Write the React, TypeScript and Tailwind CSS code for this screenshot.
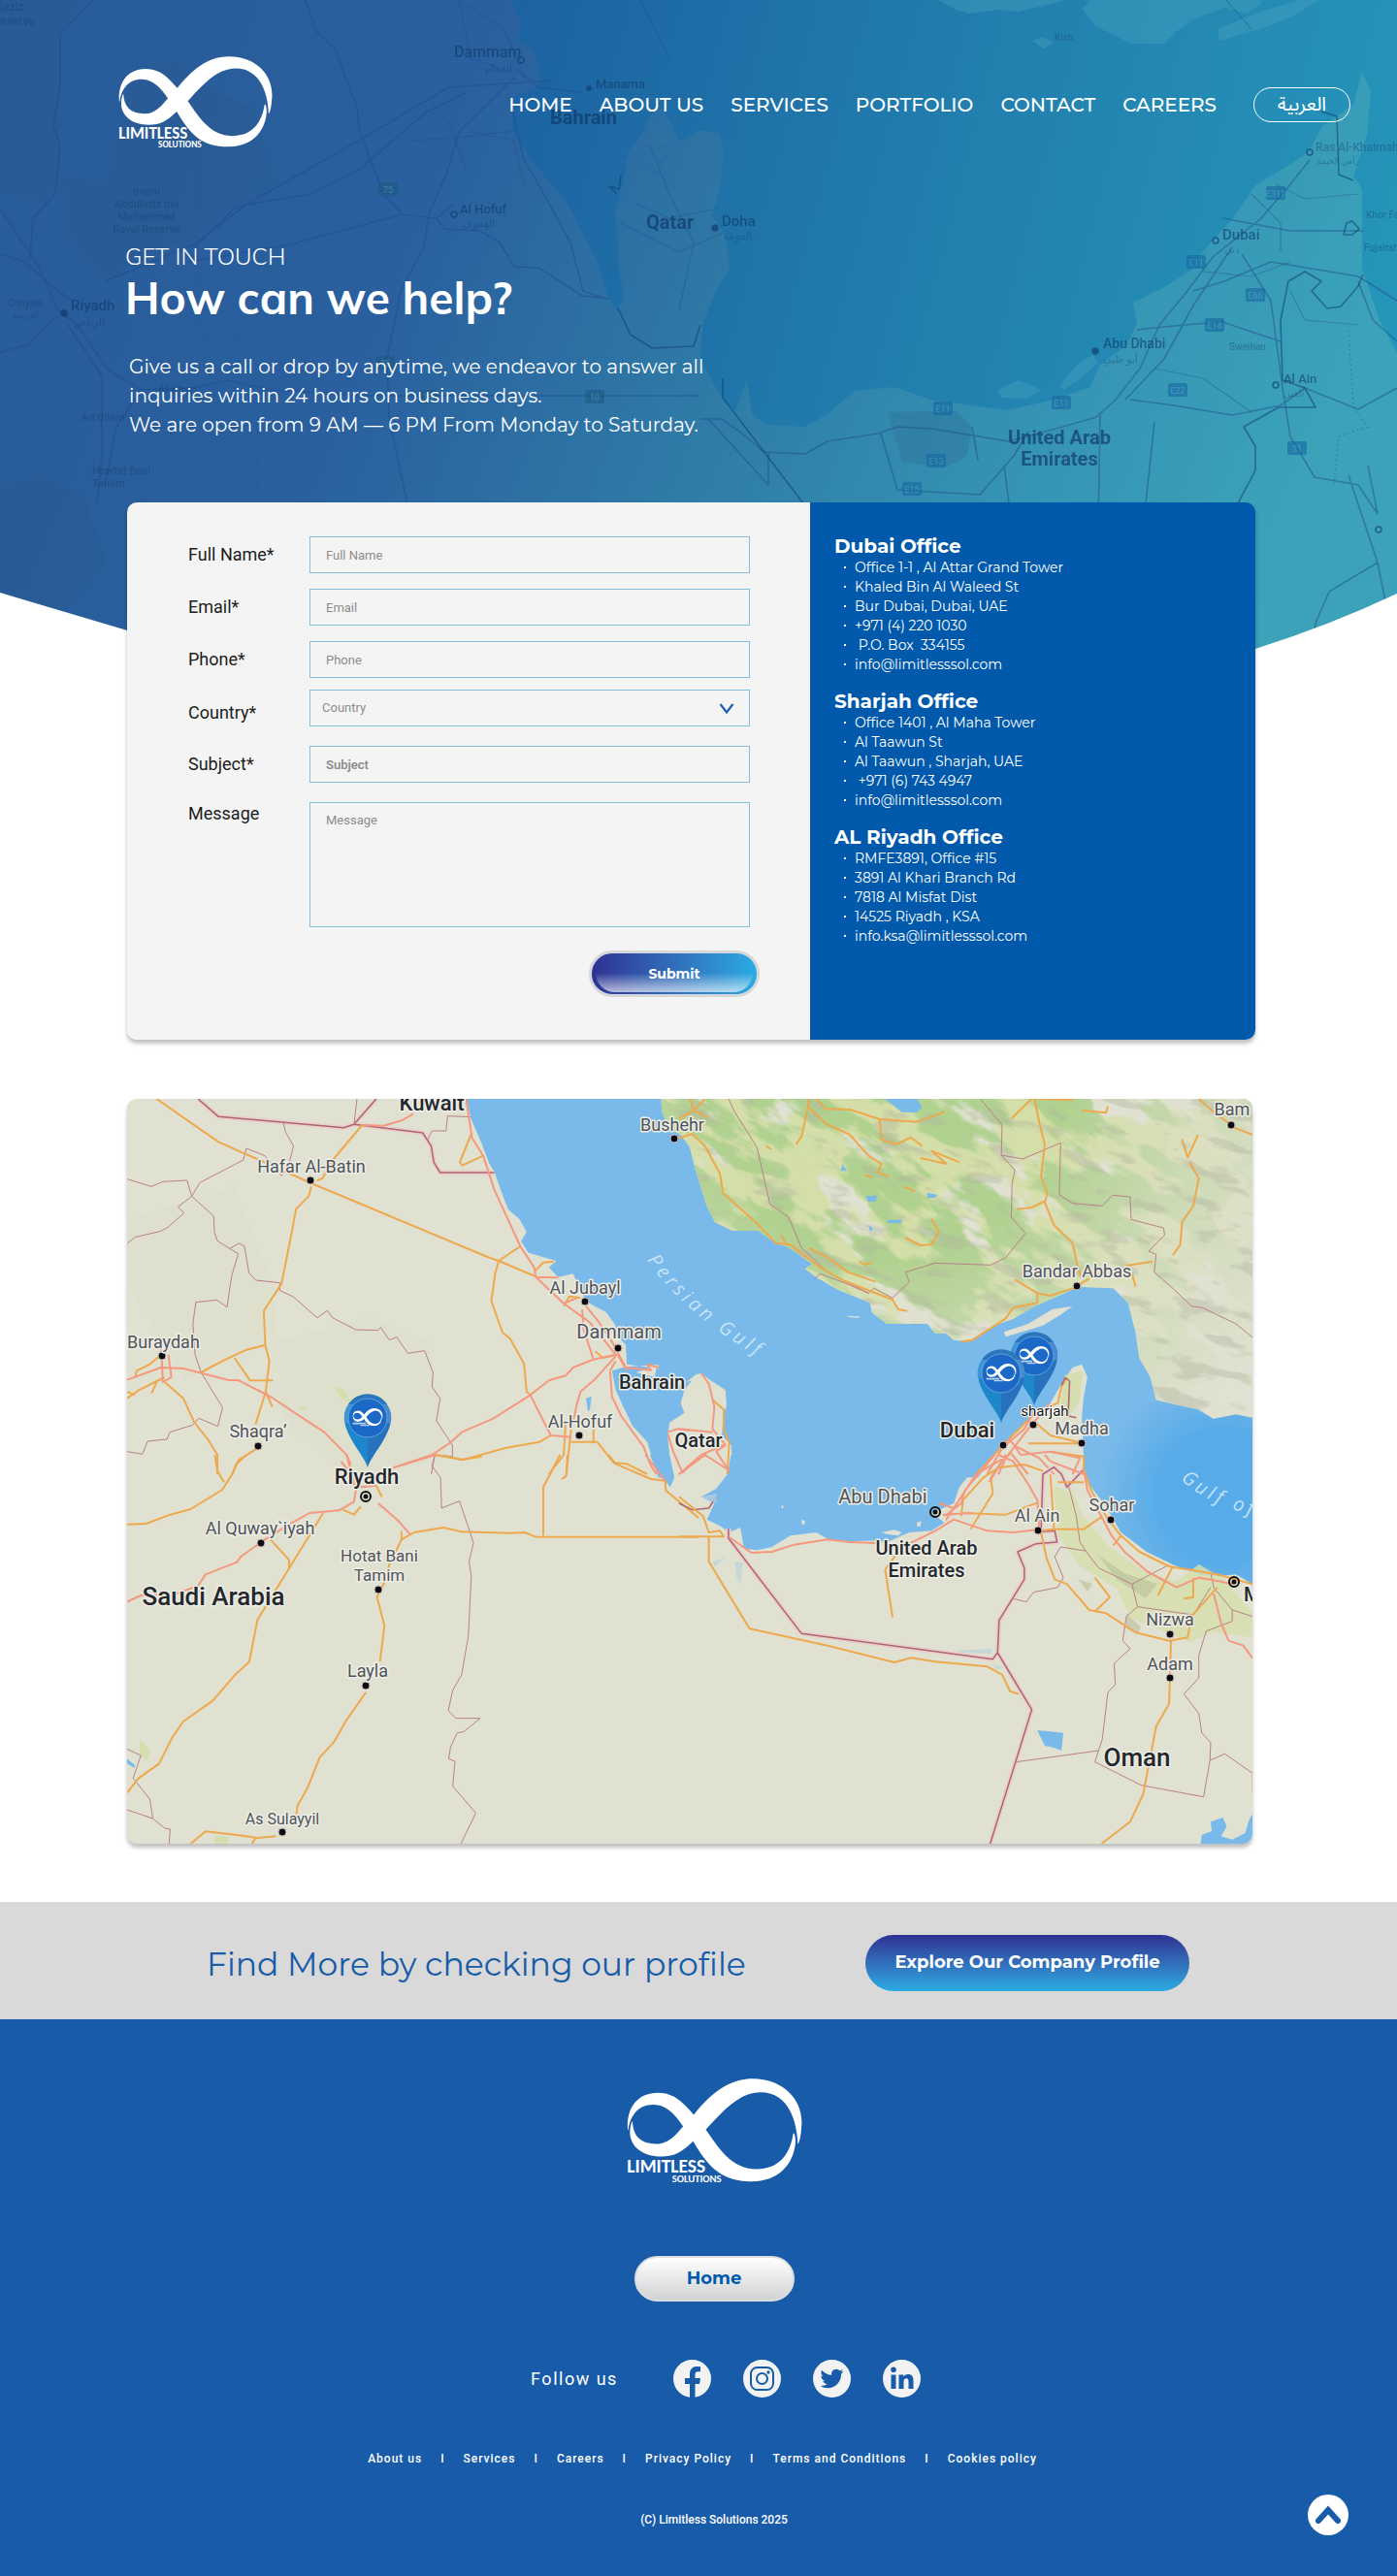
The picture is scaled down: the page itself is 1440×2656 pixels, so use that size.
import type { ReactNode } from "react";

/* ---------- Brand ---------- */

const RIBBONS =
  "M141 257C136 190 170 142 235 142C285 142 315 175 345 210L382 256C420 310 460 378 538 378C610 378 643 330 652 268C656 262 661 285 658 305C648 372 600 416 525 416C430 416 390 372 343 292L312 246C290 213 262 179 220 179C172 179 148 215 143 257Z" +
  "M156 232C158 275 180 300 230 300C270 300 295 265 312 246L345 210C390 155 445 99 527 99C625 99 688 170 677 252C676 275 670 300 666 300C664 235 640 141 551 141C480 141 425 210 382 256L343 292C310 325 285 339 245 339C180 339 138 300 150 245C152 236 154 230 156 232Z";

function Logo({ className }: { className: string }) {
  return (
    <svg viewBox="138 98 542 324" className={className} role="img" aria-label="Limitless Solutions" fill="#fff">
      <path d={RIBBONS} />
      <text x="139" y="389" fontFamily="Carlito, Lato" fontWeight="700" fontSize="58">
        LIMITLESS
      </text>
      <text x="278" y="418" fontFamily="Carlito, Lato" fontWeight="700" fontSize="32">
        SOLUTIONS
      </text>
    </svg>
  );
}

/* ---------- Hero backdrop ---------- */

type Label = { x: number; y: number; t: string; s?: number; b?: boolean; a?: "start" | "middle" | "end" };

const heroLabels: Label[] = [
  { x: 0, y: 11, t: "laziz", s: 12 },
  { x: 0, y: 26, t: "eserve", s: 12 },
  { x: 468, y: 59, t: "Dammam", s: 16 },
  { x: 614, y: 91, t: "Manama", s: 13 },
  { x: 567, y: 128, t: "Bahrain", s: 20, b: true },
  { x: 474, y: 220, t: "Al Hofuf", s: 13 },
  { x: 666, y: 236, t: "Qatar", s: 20, b: true },
  { x: 744, y: 233, t: "Doha", s: 15 },
  { x: 151, y: 201, t: "Imam", s: 11, a: "middle" },
  { x: 151, y: 214, t: "Abdulaziz bin", s: 11, a: "middle" },
  { x: 151, y: 227, t: "Muhammad", s: 11, a: "middle" },
  { x: 151, y: 240, t: "Royal Reserve", s: 11, a: "middle" },
  { x: 9, y: 316, t: "Diriyah", s: 11 },
  { x: 73, y: 320, t: "Riyadh", s: 15 },
  { x: 163, y: 405, t: "Al-Kharj", s: 11 },
  { x: 84, y: 434, t: "Ad Dilam", s: 11 },
  { x: 95, y: 489, t: "Howtat Bani", s: 11 },
  { x: 95, y: 502, t: "Tamim", s: 11 },
  { x: 1087, y: 42, t: "Kish", s: 10 },
  { x: 1356, y: 156, t: "Ras Al-Khaimah", s: 12 },
  { x: 1260, y: 247, t: "Dubai", s: 15 },
  { x: 1408, y: 225, t: "Khor Fakkan", s: 10 },
  { x: 1406, y: 259, t: "Fujairah", s: 10 },
  { x: 1137, y: 359, t: "Abu Dhabi", s: 14 },
  { x: 1267, y: 361, t: "Sweihan", s: 10 },
  { x: 1323, y: 395, t: "Al Ain", s: 13 },
  { x: 1092, y: 458, t: "United Arab", s: 20, b: true, a: "middle" },
  { x: 1092, y: 480, t: "Emirates", s: 20, b: true, a: "middle" },
  { x: 500, y: 74, t: "الدمام", s: 11 },
  { x: 476, y: 234, t: "الهفوف", s: 11 },
  { x: 745, y: 247, t: "الدوحة", s: 11 },
  { x: 76, y: 336, t: "الرياض", s: 11 },
  { x: 13, y: 328, t: "الدرعية", s: 9 },
  { x: 1262, y: 261, t: "دبي", s: 10 },
  { x: 1137, y: 374, t: "أبو ظبي", s: 11 },
  { x: 1323, y: 409, t: "العين", s: 10 },
  { x: 1357, y: 169, t: "رأس الخيمة", s: 9 },
];

const heroShields: [number, number, string][] = [
  [400, 195, "75"],
  [397, 374, "75"],
  [441, 409, "10"],
  [613, 409, "10"],
  [1315, 199, "E311"],
  [1233, 270, "E11"],
  [1294, 304, "E66"],
  [1252, 335, "E14"],
  [1214, 402, "E22"],
  [1094, 415, "E11"],
  [972, 421, "E11"],
  [965, 475, "E13"],
  [940, 504, "E15"],
  [1337, 462, "21"],
];

function HeroBackdrop() {
  return (
    <svg viewBox="0 0 1440 760" className="absolute inset-x-0 top-0 w-full" aria-hidden="true">
      <defs>
        <linearGradient id="heroLand" gradientUnits="userSpaceOnUse" x1="120" y1="160" x2="1300" y2="620">
          <stop offset="0" stopColor="#295c9b" />
          <stop offset=".25" stopColor="#2a609f" />
          <stop offset=".55" stopColor="#2f7ea8" />
          <stop offset=".8" stopColor="#3695b4" />
          <stop offset="1" stopColor="#3ba2b9" />
        </linearGradient>
        <linearGradient id="heroSea" gradientUnits="userSpaceOnUse" x1="520" y1="100" x2="1440" y2="340">
          <stop offset="0" stopColor="#1c63a2" />
          <stop offset=".5" stopColor="#227fae" />
          <stop offset="1" stopColor="#2596ba" />
        </linearGradient>
        <clipPath id="heroShape">
          <path d="M0 0H1440V612Q1370 645 1294 669Q720 840 131 650L0 611Z" />
        </clipPath>
      </defs>
      <g clipPath="url(#heroShape)">
        <rect width="1440" height="760" fill="url(#heroLand)" />
        <path
          fill="url(#heroSea)"
          d="M526 0L537 20L535 40L551 53L558 80L551 90L528 100L528 133L544 160L560 180L583 207L601 240L617 273L627 307L636 320L643 307L638 277L636 240L634 217L643 187L647 157L661 140L670 120L682 110L692 128L700 146L722 134L740 138L746 152L743 190L734 222L748 243L752 277L738 300L724 335L722 372L744 410L758 425L770 390L775 427L789 438L830 440L853 427L881 403L922 399L959 412L1037 423L1087 412L1124 399L1133 377L1161 356L1172 334L1168 312L1202 295L1230 277L1239 260L1271 225L1294 191L1331 169L1349 156L1363 130L1395 108L1404 74L1413 95L1409 139L1395 182L1404 195L1404 277L1422 330L1440 364V0Z"
        />
        <path
          fill="#4fa6c0"
          opacity=".35"
          d="M967 0L985 10L1000 14L1030 10L1050 12L1100 0ZM1124 0L1115 9L1130 28L1142 33L1166 45H1200L1212 33L1230 20L1262 8L1285 14L1300 4V0ZM1255 30L1300 12L1340 0H1360L1330 18L1300 30L1257 42ZM1064 42L1075 38L1086 44L1076 50ZM1028 402L1050 392L1074 402L1058 411L1032 410ZM1092 398L1110 376L1126 366L1132 374L1112 392L1096 402Z"
        />
        <g fill="#2b5a82" opacity=".22">
          <path d="M0 0H85L62 35L60 180L50 210L0 200ZM62 180L110 190L135 80L180 62L220 95L260 110L285 190L220 225L200 248L160 258L110 290L75 255ZM0 500L45 490L85 510L110 580L60 640L0 610ZM915 425L985 424L1002 440L997 470L975 482L930 476Z" />
        </g>
        <g fill="none" stroke="#1f4a8c" strokeWidth="1.6" opacity=".45" strokeLinejoin="round">
          <path d="M97 0L62 35V88L55 130L62 150L57 200L34 225L31 265M315 0L326 32L345 50L368 110L370 133L395 200L415 221L450 225L468 210M570 83L462 90L370 145L255 210L200 252L108 290M530 70L555 90L600 95M480 96L440 115L370 175L320 200L243 213L201 255M415 221L340 241L300 252L195 270M530 80L473 136L460 180L442 220L437 255L413 300L399 370L401 430L420 520M450 225L458 236L495 238L515 250L530 275L555 276L600 305L628 308M525 100L540 165L555 190L588 250L601 300L625 308M0 215L40 275L60 320L80 335L110 380L145 402L200 400L235 392L280 402L380 408H720M70 335L105 388V470L100 520M145 402L120 440L108 500M0 363L30 355L60 325M0 262L25 270L60 300L75 310" />
          <path d="M722 432H744L765 447L787 466L830 468L853 455L905 447L925 440L960 442L1040 455L1092 441L1130 430L1150 412L1175 380L1195 335L1220 305L1250 265L1300 225L1330 190L1350 165M1165 412L1210 418L1270 428L1320 418L1345 400L1400 422L1440 400M1280 262L1310 310L1322 400L1330 450L1355 492L1400 500L1420 530L1410 480M1172 340L1220 335L1260 332L1320 352M1230 300L1262 290L1310 270L1400 285L1440 310M1260 225L1330 238H1405M1270 255L1230 315L1200 370L1160 412M1400 290L1415 330L1440 352M1134 425L1132 550M1190 435L1181 519L1275 540M908 447L925 505L1010 510L1045 470L1060 445M1035 480L1044 550M1002 440L1008 475M1420 580L1370 610L1357 640L1350 670L1320 700M1390 490L1420 580L1432 640M792 466V500L730 432" />
        </g>
        <g fill="none" stroke="#0f3f70" strokeWidth="1.6" opacity=".55" strokeLinejoin="round">
          <path d="M745 390V410L828 519M1276 519L1294 485V460L1282 440L1318 420L1356 420L1345 400L1322 392L1320 330L1328 290L1345 280L1362 290L1352 300L1368 318L1382 316L1400 295L1405 283M1362 115L1378 120L1380 180L1395 186M637 318L650 345L672 359L715 357L722 335M640 180L638 195L628 192L636 200M1385 242L1388 230L1394 228L1401 236L1394 242Z" />
        </g>
        <g fill="none" stroke="#1f4a8c" strokeWidth="1.2" opacity=".35">
          <path d="M473 0L485 60L530 75M473 0L520 30L540 80M445 105L465 130L480 175M485 136L530 145L540 190M423 145L470 142L530 135M660 0L690 60M1264 0L1290 30M1330 300L1345 330L1400 335M1290 200L1320 230V260M1315 190L1345 205L1400 200M1240 280L1290 285L1330 270M1190 380L1240 390L1290 425M670 150L690 200L715 250L700 320M655 210L690 225L740 215M640 230L700 260L745 240M735 540L770 620M680 560L720 660" />
          <path strokeDasharray="2 3" d="M124 0L140 60L180 62M105 45L130 50L200 160L210 225M205 245L200 310L213 353L245 343L265 430V560M1390 340L1395 420L1410 440L1380 450L1375 500M660 150L700 152L680 165V180L640 160" />
        </g>
        {heroShields.map(([x, y, t], i) => (
          <g key={i} opacity=".6">
            <rect x={x - 10} y={y - 7} width="20" height="14" rx="2" fill={x < 700 ? "#1d5a82" : "#1667a3"} />
            <text x={x} y={y + 4} fontSize="9" fontFamily="Roboto" fill="#4b9cbc" textAnchor="middle">
              {t}
            </text>
          </g>
        ))}
        <g fontFamily="Roboto, 'DejaVu Sans', sans-serif" fill="#103a6b">
          {heroLabels.map((l) => (
            <text
              key={l.t}
              x={l.x}
              y={l.y}
              fontSize={l.s}
              fontWeight={l.b ? 700 : 500}
              textAnchor={l.a}
              opacity={l.b ? 0.7 : (l.s ?? 0) > 12 ? 0.6 : 0.35}
            >
              {l.t}
            </text>
          ))}
        </g>
        <g fill="none" stroke="#103a6b" strokeWidth="1.5" opacity=".65">
          <circle cx="537" cy="62" r="3" />
          <circle cx="468" cy="221" r="3" />
          <circle cx="1253" cy="248" r="3" />
          <circle cx="1350" cy="157" r="3" />
          <circle cx="1315" cy="397" r="3" />
          <circle cx="1421" cy="546" r="3" />
          <circle cx="66" cy="323" r="3" fill="#103a6b" />
          <circle cx="737" cy="235" r="3" fill="#103a6b" />
          <circle cx="1129" cy="362" r="3" fill="#103a6b" />
          <circle cx="607" cy="91" r="2" fill="#103a6b" />
        </g>
      </g>
    </svg>
  );
}

/* ---------- Office map ---------- */

const cities: Label[] = [
  { x: 190, y: 76, t: "Hafar Al-Batin", s: 18, a: "middle" },
  { x: 562, y: 33, t: "Bushehr", s: 18, a: "middle" },
  { x: 472, y: 201, t: "Al Jubayl", s: 18, a: "middle" },
  { x: 507, y: 247, t: "Dammam", s: 20, a: "middle" },
  { x: 467, y: 339, t: "Al-Hofuf", s: 18, a: "middle" },
  { x: 0, y: 257, t: "Buraydah", s: 18 },
  { x: 135, y: 349, t: "Shaqra’", s: 18, a: "middle" },
  { x: 137, y: 449, t: "Al Quway`iyah", s: 18, a: "middle" },
  { x: 260, y: 477, t: "Hotat Bani", s: 17, a: "middle" },
  { x: 260, y: 497, t: "Tamim", s: 17, a: "middle" },
  { x: 248, y: 596, t: "Layla", s: 18, a: "middle" },
  { x: 160, y: 748, t: "As Sulayyil", s: 16, a: "middle" },
  { x: 1139, y: 17, t: "Bam", s: 18, a: "middle" },
  { x: 979, y: 184, t: "Bandar Abbas", s: 18, a: "middle" },
  { x: 984, y: 346, t: "Madha", s: 18, a: "middle" },
  { x: 779, y: 417, t: "Abu Dhabi", s: 20, a: "middle" },
  { x: 938, y: 436, t: "Al Ain", s: 18, a: "middle" },
  { x: 1015, y: 425, t: "Sohar", s: 18, a: "middle" },
  { x: 1075, y: 543, t: "Nizwa", s: 18, a: "middle" },
  { x: 1075, y: 589, t: "Adam", s: 18, a: "middle" },
];

const places: Label[] = [
  { x: 314, y: 12, t: "Kuwait", s: 22, a: "middle" },
  { x: 541, y: 299, t: "Bahrain", s: 20, a: "middle" },
  { x: 589, y: 359, t: "Qatar", s: 20, a: "middle" },
  { x: 247, y: 397, t: "Riyadh", s: 22, a: "middle" },
  { x: 89, y: 522, t: "Saudi Arabia", s: 26, a: "middle" },
  { x: 866, y: 349, t: "Dubai", s: 22, a: "middle" },
  { x: 824, y: 470, t: "United Arab", s: 20, a: "middle" },
  { x: 824, y: 493, t: "Emirates", s: 20, a: "middle" },
  { x: 1041, y: 688, t: "Oman", s: 26, a: "middle" },
  { x: 1151, y: 518, t: "M", s: 20 },
];

const dots = [
  [189, 84], [564, 41], [472, 209], [506, 257], [466, 347], [36, 265], [135, 358], [138, 458], [259, 506],
  [246, 605], [160, 756], [1138, 27], [979, 193], [984, 355], [903, 357], [934, 336], [939, 445], [1014, 434],
  [1075, 552], [1075, 597],
];

const capitals = [
  [246, 410],
  [833, 426],
  [1141, 498],
];

function Pin({ x, y }: { x: number; y: number }) {
  return (
    <g transform={`translate(${x} ${y})`}>
      <path d="M0 0C-3-12-24-32-24-51A24 24 0 0 1 0-75Z" fill="#1e86ca" />
      <path d="M0 0C3-12 24-32 24-51A24 24 0 0 0 0-75Z" fill="#2672bd" />
      <path d="M-24-47A24 24 0 0 1-3-75L-3-40Z" fill="#3f96d2" />
      <path d="M24-47A24 24 0 0 0 3-75L3-40Z" fill="#4a8bcd" />
      <path d="M-20-65A24 24 0 0 1 20-65Z" fill="#2b76bb" />
      <circle cy="-51" r="20" fill="#1b68c6" stroke="#5fa0e0" />
      <g transform="translate(-15.5 -61) scale(.0572) translate(-138 -98)" fill="#fff">
        <path d={RIBBONS} />
        <path d="M141 355h235v32H141zM278 396h156v22H278z" opacity=".7" />
      </g>
    </g>
  );
}

/** One quarter of the map; its children use the sheet's own survey grid. */
function Sheet({ x, y, children }: { x: number; y: number; children: ReactNode }) {
  return <g transform={`translate(${x} ${y}) scale(.38265 .33333)`}>{children}</g>;
}

const IRAN =
  "M1467 39L1470 80L1490 130L1520 150L1545 190L1560 260L1590 370L1612 420L1660 447H1730L1775 485L1805 495L1875 550L1855 565L1885 590L1945 630L2030 670L2035 700L2075 735H2185L2205 765H2235L2255 785L2295 790L2365 740L2415 720L2475 680L2555 640L2590 620L2685 625L2725 670L2745 760L2755 840L2785 900L2800 970L2835 980L2915 1000L2955 1028L3015 1015L3060 1025V39Z";

const thin = "fill-none stroke-[#b98088] stroke-1";
const border = "fill-none stroke-[#b06374] stroke-[1.5px]";
const glow = "fill-none stroke-[#e8d0c9] stroke-[5px]";
const road = "fill-none stroke-[#eea84d] stroke-2";
const motorway = "fill-none stroke-[#f4987f] stroke-2";

function Line({ d, c }: { d: string; c: string }) {
  return <path d={d} className={c} vectorEffect="non-scaling-stroke" strokeLinejoin="round" />;
}

function OfficeMap() {
  return (
    <svg
      viewBox="0 0 1160 768"
      className="block w-full rounded-[10px] bg-[#e0e1d0] shadow-[0_4px_4px_rgba(0,0,0,0.25)]"
      role="img"
      aria-label="Map of our offices in Riyadh, Dubai and Sharjah"
    >
      <defs>
        <clipPath id="iran">
          <path d={IRAN} transform="translate(-11 -13) scale(.38265 .33333)" />
        </clipPath>
        <filter id="meadow" x="0" y="0" width="100%" height="100%" colorInterpolationFilters="sRGB">
          <feTurbulence type="fractalNoise" baseFrequency=".011 .022" numOctaves="5" seed="7" />
          <feColorMatrix values="0 0 0 0 .83  0 0 0 0 .87  0 0 0 0 .66  14 0 0 0 -5.4" />
        </filter>
        <filter id="forest" x="0" y="0" width="100%" height="100%" colorInterpolationFilters="sRGB">
          <feTurbulence type="fractalNoise" baseFrequency=".012 .03" numOctaves="5" seed="21" />
          <feColorMatrix values="0 0 0 0 .69  0 0 0 0 .82  0 0 0 0 .56  0 10 0 0 -4.5" />
        </filter>
        <filter id="relief" x="0" y="0" width="100%" height="100%" colorInterpolationFilters="sRGB">
          <feTurbulence type="fractalNoise" baseFrequency=".02 .06" numOctaves="4" seed="4" />
          <feColorMatrix values="0 0 0 0 .7  0 0 0 0 .71  0 0 0 0 .63  0 0 9 0 -5.2" />
        </filter>
        <radialGradient id="fadeGreen" gradientUnits="userSpaceOnUse" cx="780" cy="-30" r="480">
          <stop offset=".4" stopColor="#fff" />
          <stop offset=".7" stopColor="#fff" stopOpacity=".4" />
          <stop offset="1" stopColor="#fff" stopOpacity="0" />
        </radialGradient>
        <mask id="greenMask" maskUnits="userSpaceOnUse" x="0" y="0" width="1160" height="768">
          <rect width="1160" height="768" fill="url(#fadeGreen)" />
        </mask>
        <radialGradient id="deep" gradientUnits="userSpaceOnUse" cx="1130" cy="410" r="130">
          <stop offset=".5" stopColor="#57abe8" />
          <stop offset="1" stopColor="#57abe8" stopOpacity="0" />
        </radialGradient>
        <clipPath id="oman">
          <path d="M987 380L994 400L1009 420L1025 447L1051 467L1078 480L1105 490L1124 492L1143 490L1160 500V329L1143 325L1120 330L1100 320L1075 314L987 300Z" />
        </clipPath>
      </defs>

      <rect width="1160" height="768" fill="#e0e1d0" />
      <path d="M0 125L110 90L150 190L155 240L60 290L0 190ZM155 250L250 225L310 250L330 370L230 390L160 330Z" fill="#dcdfcc" opacity=".6" />

      <g fill="#79baea">
        <Sheet x={-11} y={-13}>
          <path d="M943 39L955 100L985 180L1005 240L1020 270L1035 320L1055 380L1085 410L1105 450L1090 480L1110 515L1185 540L1165 560L1190 590L1230 580L1265 665L1320 700L1345 740L1340 760L1372 800L1375 860L1440 870L1400 885L1450 900L1455 870L1475 890L1500 930L1550 910L1530 940L1520 980L1530 1010L1490 1040L1485 1080L1495 1210H1460L1440 1140L1430 1100L1390 1050L1365 990L1345 940L1335 880L1372 868L1480 860L1530 920L1568 885V39ZM1265 965L1280 960L1275 1000L1290 990L1270 1005Z" />
        </Sheet>
        <Sheet x={-11} y={367}>
          <path d="M1437 0L1455 50L1465 70L1478 80L1492 100L1503 70L1490 0ZM29 940L50 960L48 968L29 955Z" />
        </Sheet>
        <Sheet x={569} y={-13}>
          <path d="M-55 920L15 905L30 895L60 888L85 910L125 940L128 990L120 1010L115 1080L140 1110L143 1150L130 1210H805L850 1140L900 1080L950 1020L1000 980L1030 920L1060 870L1085 860L1100 900L1090 960L1085 1020L1092 1210H1545V39H-55Z" />
        </Sheet>
        <Sheet x={569} y={367}>
          <path d="M140 0L130 60L100 105L60 130L95 150L75 200L110 220L135 240L165 225L175 290L210 295L250 285L300 250L370 240L400 260L460 268L530 265L560 270L620 240L680 235L715 210L680 180L740 150L755 100L790 50L850 0ZM1092 0V60L1110 100L1150 160L1190 240L1260 300L1330 340L1400 370L1450 375L1500 370L1545 400V0ZM965 852L1000 856L1035 860L1030 915L1008 905L985 900ZM1405 1203L1408 1175L1435 1165L1432 1135L1465 1122L1475 1150L1460 1180L1490 1190L1525 1170L1535 1130L1545 1110V1203Z" />
        </Sheet>
      </g>
      <rect x="960" y="290" width="200" height="230" fill="url(#deep)" clipPath="url(#oman)" />

      {/* Iranian plateau */}
      <g clipPath="url(#iran)">
        <rect width="1160" height="400" fill="#e0e1d0" />
        <g mask="url(#greenMask)">
          <g transform="rotate(32 760 100)">
            <rect x="350" y="-320" width="900" height="900" filter="url(#meadow)" />
            <rect x="350" y="-320" width="900" height="900" filter="url(#forest)" />
          </g>
        </g>
        <g transform="rotate(14 760 100)">
          <rect x="520" y="-100" width="800" height="600" filter="url(#relief)" opacity=".4" />
        </g>
      </g>
      <g fill="#d5deae">
        <path d="M955 400L975 405L985 430L1010 460L1045 485L1080 498L1105 480L1130 495L1160 530V555L1120 550L1095 560L1060 545L1035 535L1020 505L980 480L960 450Z" opacity=".85" />
        <path d="M967 285L985 280L982 310L970 330L960 325ZM213 296L224 300L232 314L220 308ZM176 316L186 320L180 322ZM13 660L24 672L20 682L13 678ZM90 760H104V768H90Z" />
      </g>
      <path d="M1000 470L1030 490L1062 500L1050 515L1020 495ZM1030 530L1045 545L1042 552L1030 545ZM980 495L995 500L990 508Z" fill="#b9bf98" opacity=".6" />
      <Sheet x={569} y={-13}>
        <path d="M875 760L940 735L1005 690L1060 680L1030 705L980 740L880 775ZM450 710L485 712L488 716L460 715Z" fill="#e0e1d0" />
        <path d="M555 39L600 80L640 82L655 65L640 39ZM503 340L533 338L530 355L510 358ZM667 330L695 335L690 345L670 345ZM560 415L600 412L598 424L562 422ZM510 430L523 440L515 450ZM440 240L452 262L436 262Z" fill="#79baea" />
      </Sheet>
      <Sheet x={569} y={367}>
        <path d="M545 240L580 232L600 240L590 250L560 245ZM640 210L652 205L650 222L642 222ZM330 200L340 205L336 216L330 214ZM275 155L282 160L278 168Z" fill="#e0e1d0" />
      </Sheet>

      {/* North-west */}
      <Sheet x={-11} y={-13}>
        <Line c={glow} d="M220 39L275 94L612 128L640 118L825 144L848 185L855 235L872 267H1018M640 118L700 39" />
        <Line c={border} d="M220 39L275 94L612 128L640 118L825 144L848 185L855 235L872 267H1018M640 118L700 39" />
        <Line
          c={thin}
          d="M648 39L640 118M450 114L455 140L477 185L465 240L445 277L400 215L350 192L342 228L225 298L203 340L166 373L182 392L140 435L120 448L50 467L29 486M29 287L94 310L125 295L190 291L203 340L262 402L264 452L272 478L305 502L328 518L310 590L298 683L270 661L214 668L206 735L212 830L228 885L286 994L273 1052L222 1027L205 1048L144 1070L136 1092L84 1098L70 1138L29 1130M305 502L330 486L345 495L357 577L375 600L440 608V632L475 650L541 716L568 694L582 716L645 753L705 755L712 746L735 785L755 776L785 826L830 818L853 885L850 930L872 965L862 1035L905 1110V1145L858 1140L848 1200M838 165L850 138H888L892 92L955 95"
        />
        <Line
          c={road}
          d="M108 39L275 172L525 300L1000 528L1030 540L1128 588M1088 495L1030 540L1020 580L1010 665L1040 762L1060 780L1098 858L1105 945L1115 955M525 310L518 340L484 380L470 465L445 610L397 695L401 800L412 850L402 945L375 1045M662 120L585 225L555 285L540 292M402 800L350 815L285 850L228 885M318 840L360 910H422M402 945L420 992M955 150L925 235L932 245L988 215M1128 570L1150 545L1178 542M130 915L180 965L210 1040L245 1090L272 1140V1200M380 1120L330 1155L312 1200M855 1140L935 1155L1050 1118L1140 1100L1170 1080M1225 1100H1295L1340 1165L1375 1168L1430 1200M1210 1040L1205 1140L1165 1200M1225 1060L1212 1200M29 965L60 940L130 900M50 900L55 880L90 860L120 830M95 950L110 910M1205 680L1220 650L1250 655M1290 820L1310 840L1350 830M1285 1060V1105M29 945L50 955"
        />
        <Line
          c={motorway}
          d="M942 39L958 160L988 215L1018 320L1088 495L1125 560L1130 590L1205 672L1275 730L1345 830L1285 845L1230 870L1210 895L1165 910L1115 955L1015 1028L930 1070L900 1102L850 1140L745 1180M1115 955L1170 1080L1225 1085M1345 835L1290 905L1250 945L1240 985L1230 1040M662 120L720 122L770 105L800 85M29 908L120 870L180 873L300 908L330 910L415 960L480 1010L560 1070L620 1140L632 1172M1330 880L1335 960L1360 1020L1420 1115L1440 1175L1455 1200M1265 680L1300 730L1335 790L1372 870L1440 878L1430 860L1460 870M1255 690L1258 750L1285 845M120 790L125 915L148 900L140 830M1485 1070L1510 1060L1545 1065M1485 1075L1500 1130L1525 1195L1565 1150M1350 830L1375 880M1345 850L1330 880M1130 590L1190 592M1205 672L1240 655"
        />
      </Sheet>

      {/* South-west */}
      <Sheet x={-11} y={367}>
        <Line
          c={thin}
          d="M858 0L850 35L873 70L876 165L924 143L962 272L950 330L956 375L948 560L930 680L906 728L894 792L915 815H980L935 857L918 860L900 905L895 940L912 948L906 1025L968 1108L928 1203M29 910L66 930L45 1000L90 1065L98 1125L130 1155L145 1158L142 1203M29 1098L98 1125"
        />
        <Line
          c={road}
          d="M265 0L272 50L290 85M350 0L322 30L312 60L285 108L200 168L145 185L80 213L29 215M415 262L465 325V355M557 180L380 510L358 640L320 680L260 760L180 825L150 875L115 955L60 1000L29 1045M768 235V262L802 240L880 225L930 238L1060 242L1100 240L1130 254H1568M768 262L735 340L720 400L702 440L722 528L710 640M672 735L620 820L585 890L548 935L515 1030L488 1085L484 1120M200 1203L240 1165L320 1175L380 1185L430 1180M365 1203L375 1185M862 0L930 15L985 5M1195 0L1150 100V250M1215 0L1212 65L1200 75M1325 0L1345 28L1440 75L1478 80L1480 110L1568 195M610 170L640 185L658 160M700 95L715 130"
        />
        <Line
          c={motorway}
          d="M29 455L65 435L160 430L220 405L240 370L325 332L335 315L400 262L470 212L520 180L600 172L640 145L645 110L620 0M705 150L760 205L790 245M745 40L860 0M1425 0L1478 80M605 20L660 100L700 95"
        />
      </Sheet>

      {/* North-east */}
      <Sheet x={569} y={-13}>
        <Line
          c={thin}
          d="M133 39L150 80L175 125L210 190L245 365L295 405L330 500L400 575L510 640L525 625L575 655L620 605L610 575L690 547L840 553L880 530L933 455L895 405L897 300L905 260L868 213L870 120L812 39M868 213L925 225L1028 175L1024 335L1060 362L1140 370L1168 337L1215 342L1218 412L1305 438L1308 460L1265 510L1285 520L1280 575L1330 625L1380 680L1410 685L1500 735L1545 777M365 595L380 580L450 610L510 640"
        />
        <Line
          c={road}
          d="M0 160L35 148L70 185L110 270L118 330L215 430L260 485L300 490L380 560L440 600L575 660L590 690L615 695M350 39L345 75L330 155L315 180M350 65L395 115L460 150L510 215L545 240L535 265L565 280M370 39L395 70L460 72L540 102L545 165L585 180L625 158L655 185M540 102L640 110L715 80M957 39L970 110L985 180L975 280L992 330L985 360L1010 430L1060 485L1070 540L1082 590M950 39L895 100M962 39L1060 42M1085 75L1150 82L1155 62M1375 235L1400 285L1385 370L1355 420L1350 490L1330 522M1355 165L1370 220L1398 150M1400 39L1440 80L1500 130L1545 150M910 380L950 375L985 355M905 598L965 640L1000 648L1060 625L1105 595M965 640V670L900 685L880 718L790 785L760 790M650 222L720 240L680 200L755 235M610 468L650 492L680 490L700 450L680 410M350 500L400 530L455 575L530 605M275 460L290 490M1205 555L1275 542M1220 580L1230 620M605 310L635 325M30 39L40 75L75 95M0 100L40 75L70 39M485 542L500 552L520 545M1045 900L1030 930L1020 980L960 1010L890 1090L800 1200M960 1040L1000 1080L1090 1105M940 1105H1090M1000 1130L1090 1145V1200M90 970L120 1000V1060L135 1100L130 1200M235 185L248 195M500 275L520 282"
        />
        <Line c={border} d="M1030 925L1040 902L1052 912L1048 1020L1070 1025" />
        <Line
          c={motorway}
          d="M60 888L80 920L95 990L90 1060L125 1110L100 1130L135 1190M0 1060L90 1070M0 1200L60 1140L120 1110M955 1010L930 1060L870 1120L830 1200M1000 980L940 1060L880 1150L860 1200M890 1090L920 1140L1000 1130L1080 1150L1060 1200M900 1110L970 1150L1010 1200M890 1130L940 1200"
        />
      </Sheet>

      {/* South-east */}
      <Sheet x={569} y={367}>
        <Line c={glow} d="M133 228V258L330 553L845 632L858 612L862 512L930 385V350L912 300L962 275L1018 270L1012 235L975 238L980 60L1010 38L1030 60L1045 100L1090 45M858 612L950 788L838 1203" />
        <Line c={border} d="M133 228V258L330 553L845 632L858 612L862 512L930 385V350L912 300L962 275L1018 270L1012 235L975 238L980 60L1010 38L1030 60L1045 100L1090 45M858 612L950 788L838 1203M0 150L35 170L80 165L97 135" />
        <Line
          c={thin}
          d="M908 950L1130 915L1120 950L1245 1022L1413 1058L1430 945L1432 890L1408 860L1400 800L1360 740L1400 690V620L1420 545L1490 515V480L1440 410L1432 365M900 445L935 455L955 425L1020 410L1035 380L1012 315L1028 285L1095 297L1130 350L1220 400L1235 470L1385 495L1432 410M1220 400L1320 340M1235 470L1205 500L1195 575L1215 600L1172 645L1175 710L1155 735L1140 880L1130 915M1430 945L1470 925L1545 985V1040M1050 100L1070 190L1080 270L1095 297M1490 480L1545 500"
        />
        <Line
          c={road}
          d="M0 253H120L110 235L80 240L65 190L0 130M80 255V330L190 538L400 590L580 642L625 628L690 640L830 655L870 680L892 732L915 740M590 300L555 355L575 503M765 180L880 185L965 148M870 20L840 70L845 120L785 230M760 190L765 140L820 70L860 40L930 30L980 50M1000 60L1010 230L975 235M975 240L990 320L1012 385L1045 400L1105 480L1150 490L1230 550L1320 575L1370 565L1380 500L1450 410M1325 575L1320 770L1285 840L1250 1050L1215 1135L1138 1203M1090 45L1110 110L1150 190L1190 250L1240 300L1320 345L1450 370L1545 400M1010 230L1090 230L1140 190M1120 380L1160 440L1120 485M1330 345L1290 435M1385 380V440L1360 445M1190 250L1170 280M1020 85H1090"
        />
        <Line
          c={motorway}
          d="M135 255L195 303L250 300L310 278L400 262L460 270L535 273M620 275L690 235L740 200L830 235L900 240L965 232M700 150L740 165L720 200L800 60L890 0M715 190L760 150L770 110L850 0M860 0L900 20L940 90L965 140L970 230M880 0L835 85M985 0L1000 20L1090 60M1090 45L1100 110L1165 250L1200 300L1260 360L1340 410L1400 380L1450 390L1490 400M1440 430L1460 520L1480 575L1520 590L1545 630M0 60L70 0L130 45M710 185L790 180M600 280L560 290"
        />
        <path d="M90 330L125 318L95 345ZM150 330L172 335L165 400L155 380ZM835 435L880 445ZM750 605L845 600L840 615L760 612ZM550 1035L605 1050ZM60 130L100 120V150ZM840 650L875 655L860 665Z" fill="#b9d3dc" opacity=".7" />
      </Sheet>

      {/* Sea names */}
      <g fontFamily="Open Sans" fontSize="20" fontStyle="italic" fill="#c4e2f8" letterSpacing="4">
        <path id="persian" d="M536 166Q575 225 668 276" fill="none" />
        <path id="gulfOman" d="M1086 392Q1115 422 1190 436" fill="none" />
        <text>
          <textPath href="#persian">Persian Gulf</textPath>
        </text>
        <text>
          <textPath href="#gulfOman">Gulf of</textPath>
        </text>
      </g>

      {dots.map(([x, y]) => (
        <circle key={`${x}-${y}`} cx={x} cy={y} r="4" fill="#0c0c10" stroke="#c9b9b9" strokeWidth="1" />
      ))}
      {capitals.map(([x, y]) => (
        <g key={x}>
          <circle cx={x} cy={y} r="5" fill="none" stroke="#111" strokeWidth="2" />
          <circle cx={x} cy={y} r="2.5" fill="#111" />
        </g>
      ))}

      <g fontFamily="Roboto" stroke="#eeeee6" strokeWidth="3" strokeLinejoin="round" style={{ paintOrder: "stroke" }}>
        {cities.map((l) => (
          <text key={l.t} x={l.x} y={l.y} fontSize={l.s} textAnchor={l.a} fill="#50545a">
            {l.t}
          </text>
        ))}
        {places.map((l) => (
          <text key={l.t} x={l.x} y={l.y} fontSize={l.s} fontWeight="500" textAnchor={l.a} fill="#24282d">
            {l.t}
          </text>
        ))}
      </g>
      <Pin x={935} y={316} />
      <Pin x={901} y={334} />
      <Pin x={248} y={380} />
      <text
        x="946"
        y="327"
        fontFamily="Roboto"
        fontSize="15"
        textAnchor="middle"
        fill="#111"
        stroke="#fff"
        strokeWidth="2"
        style={{ paintOrder: "stroke" }}
      >
        sharjah
      </text>
    </svg>
  );
}

/* ---------- Form ---------- */

const fieldBox =
  "h-[38px] w-full border border-[#86bedd] bg-transparent px-4 text-[13px] text-[#333] outline-none placeholder:text-[#8c8c8c]";
const fieldLabel = "w-[125px] shrink-0 text-[18px] leading-6 text-[#1c1c1c]";

function Field({ id, label, className, bold }: { id: string; label: string; className?: string; bold?: boolean }) {
  return (
    <div className={`flex items-center ${className ?? ""}`}>
      <label htmlFor={id} className={fieldLabel}>
        {label}*
      </label>
      <input id={id} placeholder={label} className={`${fieldBox} ${bold ? "placeholder:font-semibold" : ""}`} />
    </div>
  );
}

function ContactForm() {
  return (
    <form className="flex w-[704px] shrink flex-col bg-[#f4f4f4] pt-[35px] pr-[62px] pb-11 pl-[63px] font-['Roboto',sans-serif]">
      <Field id="name" label="Full Name" />
      <Field id="email" label="Email" className="mt-4" />
      <Field id="phone" label="Phone" className="mt-4" />
      <div className="mt-3 flex items-center">
        <label htmlFor="country" className={`pt-2.5 ${fieldLabel}`}>
          Country*
        </label>
        <div className="relative w-full">
          <select
            id="country"
            className="block h-[38px] w-full appearance-none border border-[#86bedd] bg-transparent px-3 text-[13px] text-[#8c8c8c] outline-none"
          >
            <option>Country</option>
          </select>
          <svg viewBox="0 0 16 12" className="pointer-events-none absolute top-3.5 right-4 w-4" aria-hidden="true">
            <path d="M1.500 1L8 9.500L14.500 1" fill="none" stroke="#1b5fae" strokeWidth="2.2" />
          </svg>
        </div>
      </div>
      <Field id="subject" label="Subject" className="mt-5" bold />
      <div className="mt-5 flex items-start">
        <label htmlFor="message" className={fieldLabel}>
          Message
        </label>
        <textarea
          id="message"
          placeholder="Message"
          className="block h-[129px] w-full resize-none border border-[#86bedd] bg-transparent px-4 py-2 text-[13px] text-[#333] outline-none placeholder:text-[#8c8c8c]"
        />
      </div>
      <button
        type="button"
        className="relative -mr-2.5 mt-6 h-12 w-44 self-end overflow-hidden rounded-full border-[3px] border-[#d6d7da] bg-linear-to-r from-[#2e3192] to-[#29abe2] font-['Montserrat','Open_Sans',sans-serif] text-[14px] font-bold text-white"
      >
        <span className="absolute inset-x-1 bottom-0.5 h-5 rounded-b-full bg-linear-to-b from-transparent to-white/65" />
        <span className="relative">Submit</span>
      </button>
    </form>
  );
}

/* ---------- Offices ---------- */

const offices = [
  {
    name: "Dubai Office",
    lines: [
      "Office 1-1 , Al Attar Grand Tower",
      "Khaled Bin Al Waleed St",
      "Bur Dubai, Dubai, UAE",
      "+971 (4) 220 1030",
      " P.O. Box  334155",
      "info@limitlesssol.com",
    ],
  },
  {
    name: "Sharjah Office",
    lines: [
      "Office 1401 , Al Maha Tower",
      "Al Taawun St",
      "Al Taawun , Sharjah, UAE",
      " +971 (6) 743 4947",
      "info@limitlesssol.com",
    ],
  },
  {
    name: "AL Riyadh Office",
    lines: [
      "RMFE3891, Office #15",
      "3891 Al Khari Branch Rd",
      "7818 Al Misfat Dist",
      "14525 Riyadh , KSA",
      "info.ksa@limitlesssol.com",
    ],
  },
];

function Offices() {
  return (
    <div className="flex flex-1 flex-col gap-[18px] bg-[#0059aa] py-[35px] pl-[25px] text-white">
      {offices.map((o) => (
        <section key={o.name}>
          <h2 className="text-[20px] leading-5 font-bold">{o.name}</h2>
          <ul className="mt-0.5 pl-2.5">
            {o.lines.map((l) => (
              <li key={l} className="flex h-5 items-center gap-[9px] text-[14px] leading-5 whitespace-pre">
                <span className="size-0.5 bg-white" />
                {l}
              </li>
            ))}
          </ul>
        </section>
      ))}
    </div>
  );
}

/* ---------- Footer ---------- */

const socials: { name: string; art: ReactNode }[] = [
  {
    name: "Facebook",
    art: (
      <path
        fill="#185ba8"
        d="M17 39V25H12V19H17V15C17 9.500 20 7 24.500 7C26.500 7 28 7.300 28 7.300V12.300H25.500C23 12.300 22.500 13.800 22.500 15.300V19H28L27 25H22.500V39Z"
      />
    ),
  },
  {
    name: "Instagram",
    art: (
      <g fill="none" stroke="#185ba8" strokeWidth="2">
        <rect x="8" y="8" width="23" height="23" rx="6.500" />
        <circle cx="19.500" cy="19.500" r="5.500" />
        <circle cx="26" cy="13" r=".7" />
      </g>
    ),
  },
  {
    name: "Twitter",
    art: (
      <path
        fill="#185ba8"
        transform="translate(7.500 7.500)"
        d="M23.953 4.570a10 10 0 01-2.825.775 4.958 4.958 0 002.163-2.723c-.951.555-2.005.959-3.127 1.184a4.920 4.920 0 00-8.384 4.482C7.690 8.095 4.067 6.130 1.640 3.162a4.822 4.822 0 00-.666 2.475c0 1.710.870 3.213 2.188 4.096a4.904 4.904 0 01-2.228-.616v.060a4.923 4.923 0 003.946 4.827 4.996 4.996 0 01-2.212.085 4.936 4.936 0 004.604 3.417 9.867 9.867 0 01-6.102 2.105c-.390 0-.779-.023-1.170-.067a13.995 13.995 0 007.557 2.209c9.053 0 13.998-7.496 13.998-13.985 0-.210 0-.420-.015-.630A9.935 9.935 0 0024 4.590z"
      />
    ),
  },
  {
    name: "LinkedIn",
    art: (
      <path
        fill="#185ba8"
        d="M8.500 15.500H13.500V30H8.500ZM11 7.500A2.800 2.800 0 1 1 11 13.100A2.800 2.800 0 0 1 11 7.500ZM16.500 15.500H21.200V17.500C22.200 16 23.700 15 26 15C30 15 31.500 17.600 31.500 21.700V30H26.500V22.700C26.500 20.700 26 19.300 24.200 19.300C22.300 19.300 21.500 20.700 21.500 22.700V30H16.500Z"
      />
    ),
  },
];

const footerLinks = ["About us", "Services", "Careers", "Privacy Policy", "Terms and Conditions", "Cookies policy"];

function Footer() {
  return (
    <footer className="relative flex flex-col items-center bg-[#185ba8] pt-[61px] pb-[51px] pl-8 font-['Roboto',sans-serif] text-white">
      <Logo className="w-[181px]" />
      <a
        href="#home"
        className="mt-[75px] flex h-[47px] w-[165px] items-center justify-center rounded-full border-2 border-[#dcdde0] bg-linear-to-b from-white to-[#d0d2d4] font-['Montserrat','Inter',sans-serif] text-[18px] font-bold text-[#0059aa]"
      >
        Home
      </a>
      <div className="mt-[60px] ml-6 flex items-center gap-[33px]">
        <span className="mr-6 text-[18px] leading-6 tracking-[1.5px]">Follow us</span>
        {socials.map((s) => (
          <a key={s.name} href={`#${s.name}`} aria-label={s.name}>
            <svg viewBox="0 0 39 39" className="size-[39px]" aria-hidden="true">
              <circle cx="19.500" cy="19.500" r="19.500" fill="#f2f2f2" />
              {s.art}
            </svg>
          </a>
        ))}
      </div>
      <nav className="mt-[55px] mr-6 flex gap-[19px] text-[12px] leading-4 font-medium tracking-[1px]">
        {footerLinks.map((l, i) => (
          <span key={l} className="flex gap-[19px]">
            {i > 0 && <span>I</span>}
            <a href={`#${l}`}>{l}</a>
          </span>
        ))}
      </nav>
      <p className="mt-[47px] text-[12px] leading-4 font-medium">(C) Limitless Solutions 2025</p>
      <button type="button" aria-label="Back to top" className="absolute right-[50px] bottom-[43px]">
        <svg viewBox="0 0 42 42" className="size-[42px]" aria-hidden="true">
          <circle cx="21" cy="21" r="21" fill="#fff" />
          <path d="M11 27L21 16L31 27" fill="none" stroke="#185ba8" strokeWidth="6" strokeLinecap="round" />
        </svg>
      </button>
    </footer>
  );
}

/* ---------- Page ---------- */

const navItems = ["HOME", "ABOUT US", "SERVICES", "PORTFOLIO", "CONTACT", "CAREERS"];

export default function App() {
  return (
    <div className="relative bg-white font-['Montserrat','Inter',sans-serif]">
      <HeroBackdrop />
      <div className="relative">
        <header className="flex items-center justify-between pt-[58px] pr-12 pl-[122px] text-white">
          <a href="#home">
            <Logo className="w-[159px]" />
          </a>
          <nav className="flex items-center gap-7 pt-1 text-[20px] leading-6 font-medium">
            {navItems.map((n) => (
              <a key={n} href={`#${n}`}>
                {n}
              </a>
            ))}
            <button
              type="button"
              lang="ar"
              className="ml-2.5 h-9 w-[100px] rounded-full border border-white font-['Noto_Sans_Arabic','DejaVu_Sans',sans-serif] text-[20px] leading-6 font-normal"
            >
              العربية
            </button>
          </nav>
        </header>

        <main>
          <div className="pl-[129px] text-white">
            <p className="mt-[95px] font-['Mulish','Nunito_Sans','Open_Sans',sans-serif] text-[24px] leading-8 font-light">
              GET IN TOUCH
            </p>
            <h1 className="font-['Mulish','Nunito_Sans','Open_Sans',sans-serif] text-[46px] leading-[54px] font-bold">
              How can we help?
            </h1>
            <p className="mt-[29px] ml-1 text-[20px] leading-[30px]">
              Give us a call or drop by anytime, we endeavor to answer all
              <br />
              inquiries within 24 hours on business days.
              <br />
              We are open from 9 AM — 6 PM From Monday to Saturday.
            </p>
          </div>

          <div className="mt-[65px] pr-[146px] pl-[131px]">
            <div className="flex overflow-hidden rounded-[10px] shadow-[0_4px_4px_rgba(0,0,0,0.25)]">
              <ContactForm />
              <Offices />
            </div>
            <div className="mt-[61px] mr-[3px]">
              <OfficeMap />
            </div>
          </div>

          <section className="mt-[60px] flex h-[121px] items-center bg-[#d9d9d9] pt-1 pr-[214px] pl-[213px]">
            <h2 className="flex-1 pt-0.5 text-[33px] leading-10 text-[#185ba8]">Find More by checking our profile</h2>
            <a
              href="#profile"
              className="flex h-[58px] w-[334px] items-center justify-center rounded-full bg-linear-to-b from-[#2e3192] to-[#29abe2] text-[18px] font-bold text-white"
            >
              Explore Our Company Profile
            </a>
          </section>
        </main>
        <Footer />
      </div>
    </div>
  );
}
